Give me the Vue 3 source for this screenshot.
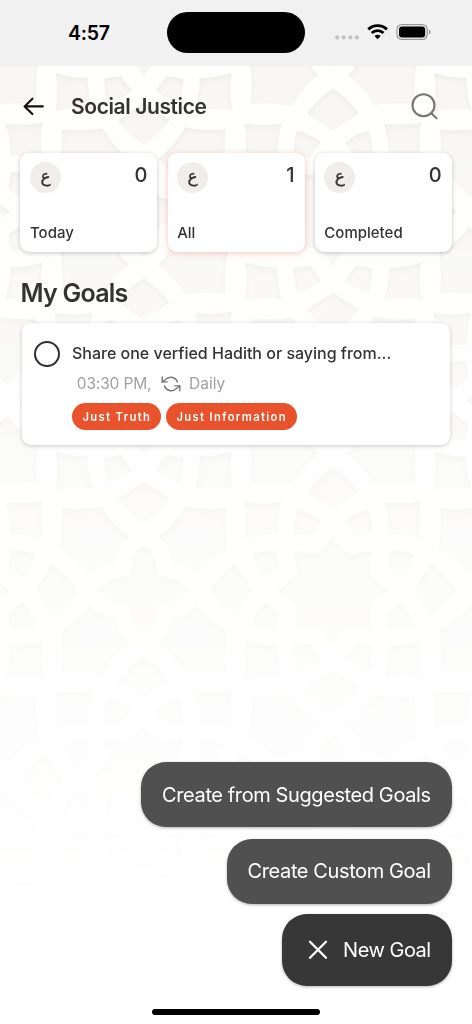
<script setup>
const stats = [
  { label: 'Today', count: 0 },
  { label: 'All', count: 1, active: true },
  { label: 'Completed', count: 0 },
]
const tags = [
  { text: 'Just Truth', kind: 'short' },
  { text: 'Just Information', kind: 'long' },
]
const actions = [
  { text: 'Create from Suggested Goals', kind: 'suggested' },
  { text: 'Create Custom Goal', kind: 'custom' },
]

// Stars and quatrefoils alternate on a square lattice.
const stars = []
const foils = []
const step = 189.3
for (let r = -3; r <= 2; r++) {
  for (let c = -2; c <= 1; c++) {
    const at = `translate(${333 + c * step} ${524 + r * step})`
    if ((r + c) % 2 === 0) stars.push(at)
    else foils.push(at)
  }
}
const turns = [0, 90, 180, 270]
</script>

<template>
  <main class="phone">
    <svg class="lattice" width="472" height="958" viewBox="0 0 472 958" aria-hidden="true">
      <defs>
        <filter id="inset" filterUnits="userSpaceOnUse" x="-20" y="-20" width="512" height="998" color-interpolation-filters="sRGB">
          <feComponentTransfer in="SourceAlpha" result="inv"><feFuncA type="linear" slope="-1" intercept="1" /></feComponentTransfer>
          <feGaussianBlur in="inv" stdDeviation="2.6" result="soft" />
          <feOffset in="soft" dy="2.5" result="moved" />
          <feFlood flood-color="#d8d2c8" flood-opacity=".26" />
          <feComposite in2="moved" operator="in" />
          <feComposite in2="SourceAlpha" operator="in" result="shade" />
          <feMerge result="all"><feMergeNode in="SourceGraphic" /><feMergeNode in="shade" /></feMerge>
          <feGaussianBlur in="all" stdDeviation=".7" />
        </filter>
        <linearGradient id="fade" x1="0" y1="0" x2="0" y2="1">
          <stop offset="0" stop-color="#fff" stop-opacity="0" />
          <stop offset=".4" stop-color="#fff" stop-opacity=".46" />
          <stop offset=".72" stop-color="#fff" stop-opacity=".78" />
          <stop offset=".92" stop-color="#fff" stop-opacity="1" />
          <stop offset="1" stop-color="#fff" />
        </linearGradient>
        <g id="star">
          <path d="M0-55Q8-40 18-36L39-39 36-18Q42-8 56 0 42 8 36 18L39 39 18 36Q8 40 0 55-8 40-18 36L-39 39-36 18Q-42 8-56 0-42-8-36-18L-39-39-18-36Q-8-40 0-55Z" />
          <g v-for="t in turns" :key="t" :transform="`rotate(${t})`">
            <path d="M-36-81Q-22-77-12-69L-23-54Q-31-55-40-57Q-39-70-36-81Z" />
            <path d="M36-81Q22-77 12-69L23-54Q31-55 40-57Q39-70 36-81Z" />
            <path d="M0-123Q15-113 26-98 14-90 0-81-14-90-26-98-15-113 0-123Z" />
            <path d="M-89-88Q-70-85-51-88-56-72-56-56-72-56-88-51-85-70-89-88Z" />
          </g>
        </g>
        <g id="foil">
          <path d="M0-45C9-38 13-29 13-20Q13-14 20-13C31-12 39-8 46 0 39 8 31 12 20 13Q13 14 13 20C13 29 9 38 0 45-9 38-13 29-13 20Q-13 14-20 13C-31 12-39 8-46 0-39-8-31-12-20-13Q-13-14-13-20C-13-29-9-38 0-45Z" />
          <path v-for="t in turns" :key="t" :transform="`rotate(${t})`" d="M-82-82Q-61-80-41-83-31-65-15-53-27-43-28-30L-30-28Q-43-27-53-15-65-31-84-41-80-61-82-82Z" />
        </g>
      </defs>
      <rect width="472" height="958" fill="#fefefd" />
      <g fill="#f8f7f5" filter="url(#inset)">
        <use v-for="s in stars" :key="s" href="#star" :transform="s" />
        <use v-for="f in foils" :key="f" href="#foil" :transform="f" />
      </g>
      <rect width="472" height="958" fill="url(#fade)" />
    </svg>

    <div class="status">
      <span class="clock">4:57</span>
      <span class="island"></span>
      <svg class="signals" width="98" height="22" viewBox="0 0 98 22">
        <g fill="#c3c3c3"><circle cx="2.2" cy="16.4" r="2.1" /><circle cx="8.7" cy="16.4" r="2.1" /><circle cx="15.3" cy="16.4" r="2.1" /><circle cx="21.8" cy="16.4" r="2.1" /></g>
        <g fill="none" stroke="#000" stroke-width="2.9">
          <path d="M33.3 8.4a13.4 13.4 0 0 1 18.6 0" />
          <path d="M36.7 12a8.5 8.5 0 0 1 11.8 0" />
        </g>
        <path d="M42.6 18.3l-3.1-3.2a4.4 4.4 0 0 1 6.2 0z" />
        <rect x="62" y="3.6" width="30.2" height="14.8" rx="4.8" fill="none" stroke="#999" stroke-width="1.2" />
        <rect x="64" y="5.6" width="26.2" height="10.8" rx="3" />
        <path d="M93.8 8.5q1.8.8 1.8 2.5t-1.8 2.5z" fill="#999" />
      </svg>
    </div>

    <header class="bar">
      <svg class="back" width="22" height="20" viewBox="0 0 22 20" fill="none" stroke="#111" stroke-width="2.1" stroke-linecap="round" stroke-linejoin="round"><path d="M19.8 10.4H1.6M9.4 2.7L1.6 10.4l7.8 7.7" /></svg>
      <h1>Social Justice</h1>
      <svg class="search" width="28" height="28" viewBox="0 0 28 28" fill="none" stroke="#777" stroke-width="2.1" stroke-linecap="round"><circle cx="12.5" cy="12.3" r="11" /><path d="M20.3 20.3l5.2 5" /></svg>
    </header>

    <section class="stats">
      <article v-for="s in stats" :key="s.label" class="stat" :class="{ active: s.active }">
        <div class="top"><span class="badge">ع</span><span class="count">{{ s.count }}</span></div>
        <span class="label">{{ s.label }}</span>
      </article>
    </section>

    <h2>My Goals</h2>

    <article class="goal">
      <span class="check"></span>
      <div class="body">
        <p class="title">Share one verfied Hadith or saying from...</p>
        <p class="meta">
          <span class="time">03:30 PM,</span>
          <svg width="20" height="18" viewBox="0 0 20 18" fill="none" stroke="#777" stroke-width="1.4" stroke-linecap="round" stroke-linejoin="round">
            <path d="M1.2 2v4.9h4.9M18.8 15.8v-4.9h-4.9" />
            <path d="M5.2 4A7.1 7.1 0 0 1 16.5 7M14.8 14A7.1 7.1 0 0 1 3.5 11M1.2 6.9L5.2 4M18.8 10.9l-4 3.1" />
          </svg>
          <span class="repeat">Daily</span>
        </p>
        <div class="tags"><span v-for="t in tags" :key="t.text" class="tag" :class="t.kind">{{ t.text }}</span></div>
      </div>
    </article>

    <nav class="actions">
      <button v-for="a in actions" :key="a.kind" class="action" :class="a.kind">{{ a.text }}</button>
      <button class="action new">
        <svg width="20" height="20" viewBox="0 0 20 20" stroke="#fff" stroke-width="2.3" stroke-linecap="round"><path d="M2 1.7l16 16M18 1.7l-16 16" /></svg>
        <span>New Goal</span>
      </button>
    </nav>
    <div class="home"></div>
  </main>
</template>

<style>
body { margin: 0; background: #fff; }
</style>

<style scoped>
.phone {
  position: relative;
  display: flex;
  flex-direction: column;
  width: 472px;
  height: 1024px;
  overflow: hidden;
  background: #fff;
  color: #333;
  font-family: Inter, "Liberation Sans", "DejaVu Sans", sans-serif;
}
.phone > * { position: relative; flex: none; box-sizing: border-box; }
.phone > .lattice { position: absolute; left: 0; top: 66px; }
h1, h2, p { margin: 0; }
.status { display: flex; height: 66px; background: #f1f1f1; }
.clock { width: 99px; margin-left: 68px; padding-top: 21px; font-size: 19.5px; line-height: 24px; font-weight: 600; color: #000; letter-spacing: -.2px; }
.island { width: 138px; height: 41px; margin-top: 12px; border-radius: 21px; background: #000; }
.signals { margin: 21px 0 0 30px; }
.bar { display: flex; height: 87px; padding: 0 33px 0 23px; }
.back { margin-top: 30px; }
h1 { margin: 27px auto 0 26px; font-size: 21px; line-height: 28px; font-weight: 600; letter-spacing: -.4px; white-space: nowrap; }
.search { margin-top: 27px; }
.stats { display: grid; grid-template-columns: repeat(3, 137px); gap: 10.2px; padding-left: 20.4px; }
.stat { display: flex; flex-direction: column; justify-content: space-between; box-sizing: border-box; height: 99px; padding: 9px 10px 9px 9.6px; border-radius: 9px; background: #fff; box-shadow: 0 1px 4px rgba(0, 0, 0, .22); }
.stat.active { box-shadow: 0 1px 6px rgba(240, 80, 50, .32); }
.top { display: flex; justify-content: space-between; }
.badge { width: 31px; height: 31px; border-radius: 50%; background: #efeeed; font: 17px/29px "DejaVu Sans", sans-serif; text-align: center; -webkit-text-stroke: .35px #333; }
.count { font-size: 20px; line-height: 26px; font-weight: 450; }
.label { font-size: 15px; line-height: 20px; font-weight: 500; }
h2 { height: 71px; padding: 25px 0 0 20.5px; font-size: 25px; line-height: 32px; font-weight: 600; letter-spacing: -.75px; }
.goal { display: flex; width: 427.6px; height: 122px; margin-left: 22.4px; border-radius: 9px; background: #fff; box-shadow: 0 1px 4px rgba(0, 0, 0, .2); }
.check { box-sizing: border-box; width: 26px; height: 26px; margin: 18px 0 0 12px; border: 2.5px solid #303030; border-radius: 50%; }
.body { padding: 20.3px 0 0 11.6px; white-space: nowrap; }
.title { font-size: 16px; line-height: 20px; font-weight: 500; }
.meta { display: flex; align-items: center; height: 20px; margin: 10.5px 0 9.2px 4.8px; font-size: 15.5px; line-height: 20px; color: #a1a1a1; }
.time { width: 84px; letter-spacing: -.15px; }
.repeat { margin-left: 8.3px; }
.tags { display: flex; gap: 5px; }
.tag { box-sizing: border-box; height: 27.5px; padding-left: 10.5px; border-radius: 14px; background: #ea522b; color: #fff; font-size: 11.2px; line-height: 28px; font-weight: 600; letter-spacing: 1.36px; }
.tag.short { width: 89px; }
.tag.long { width: 131.5px; }
.actions { display: flex; flex-direction: column; align-items: flex-end; margin-top: 317px; padding-right: 20.4px; }
.action { box-sizing: border-box; display: flex; align-items: center; height: 65.4px; margin-bottom: 11.4px; padding: 0 0 0 21px; border: 0; border-radius: 25px; background: #505050; color: #fff; font: 400 20px/26px Inter, "Liberation Sans", sans-serif; letter-spacing: -.4px; white-space: nowrap; box-shadow: 0 1px 3px rgba(0, 0, 0, .3); }
.suggested { width: 310.5px; }
.custom { width: 225px; margin-bottom: 9.8px; }
.new { width: 169.5px; height: 72.3px; margin: 0; padding-left: 26px; background: #373737; }
.new span { margin-left: 15px; letter-spacing: -.5px; }
.home { width: 168.6px; height: 6px; margin: 22.7px 0 0 151.6px; border-radius: 3px; background: #000; }
</style>
